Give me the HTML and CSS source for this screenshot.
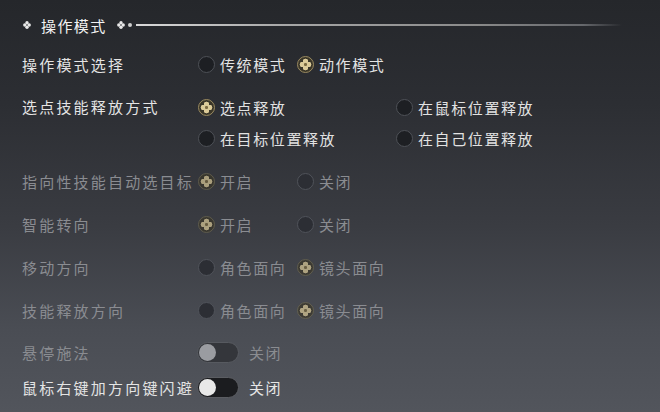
FILE: index.html
```html
<!DOCTYPE html>
<html lang="zh-CN">
<head>
  <meta charset="UTF-8">
  <title>操作模式</title>
  <link rel="stylesheet" href="styles.css">
</head>
<body>
  <div class="panel">
    <div class="title">
      <svg class="orn" width="8" height="8" viewBox="0 0 8 8"><circle cx="4" cy="1.8" r="1.7"/><circle cx="4" cy="6.2" r="1.7"/><circle cx="1.8" cy="4" r="1.7"/><circle cx="6.2" cy="4" r="1.7"/></svg>
      <span class="title-text">操作模式</span>
      <svg class="orn" width="8" height="8" viewBox="0 0 8 8"><circle cx="4" cy="1.8" r="1.7"/><circle cx="4" cy="6.2" r="1.7"/><circle cx="1.8" cy="4" r="1.7"/><circle cx="6.2" cy="4" r="1.7"/></svg>
      <span class="dot"></span>
      <span class="line"></span>
    </div>

    <div class="rows">
      <div class="row">
        <div class="label">操作模式选择</div>
        <div class="opts">
          <div class="opt"><span class="radio"></span>传统模式</div>
          <div class="opt"><span class="radio on"></span>动作模式</div>
        </div>
      </div>

      <div class="row multi">
        <div class="label">选点技能释放方式</div>
        <div class="opts wide">
          <div class="opt"><span class="radio on"></span>选点释放</div>
          <div class="opt"><span class="radio"></span>在鼠标位置释放</div>
          <div class="opt"><span class="radio"></span>在目标位置释放</div>
          <div class="opt"><span class="radio"></span>在自己位置释放</div>
        </div>
      </div>

      <div class="row off">
        <div class="label">指向性技能自动选目标</div>
        <div class="opts">
          <div class="opt"><span class="radio on"></span>开启</div>
          <div class="opt"><span class="radio"></span>关闭</div>
        </div>
      </div>

      <div class="row off">
        <div class="label">智能转向</div>
        <div class="opts">
          <div class="opt"><span class="radio on"></span>开启</div>
          <div class="opt"><span class="radio"></span>关闭</div>
        </div>
      </div>

      <div class="row off">
        <div class="label">移动方向</div>
        <div class="opts">
          <div class="opt"><span class="radio"></span>角色面向</div>
          <div class="opt"><span class="radio on"></span>镜头面向</div>
        </div>
      </div>

      <div class="row off">
        <div class="label">技能释放方向</div>
        <div class="opts">
          <div class="opt"><span class="radio"></span>角色面向</div>
          <div class="opt"><span class="radio on"></span>镜头面向</div>
        </div>
      </div>
    </div>

    <div class="toggles">
      <div class="row off">
        <div class="label">悬停施法</div>
        <div class="switch"><span class="knob"></span></div>
        <span class="state">关闭</span>
      </div>
      <div class="row">
        <div class="label">鼠标右键加方向键闪避</div>
        <div class="switch"><span class="knob"></span></div>
        <span class="state">关闭</span>
      </div>
    </div>
  </div>
</body>
</html>
```

FILE: styles.css
```css
html, body { margin: 0; height: 100%; }
body {
  font-family: "Noto Sans CJK SC", "Noto Sans", sans-serif;
  background: linear-gradient(180deg, #25272b 0%, #2c2e33 25%, #3a3c42 55%, #4a4d54 80%, #52555c 100%);
  color: #dedede;
  overflow: hidden;
}
.panel { padding: 0 0 0 22px; }

.title { display: flex; align-items: center; height: 50px; }
.title .orn { fill: #e8e8e8; }
.title .orn:first-child { margin-left: 1px; }
.title-text { font-size: 15px; color: #f2f2f2; letter-spacing: 1.4px; margin: 0 10px 0 10px; }
.dot { width: 4px; height: 4px; border-radius: 50%; background: #cfcfcf; margin: 0 4px 0 3px; }
.line {
  width: 486px; height: 2px;
  background: linear-gradient(90deg, #dadada 0%, #a8a8a8 30%, #8a8a8a 70%, #66686c 92%, rgba(90,92,96,0) 100%);
}

.rows { display: flex; flex-direction: column; gap: 15px; }
.row { display: flex; align-items: center; min-height: 28px; }
.label { width: 176px; font-size: 15px; letter-spacing: 2.2px; color: #e4e4e4; white-space: nowrap; }
.opts { display: grid; grid-template-columns: 99px 99px; row-gap: 3px; }
.opts.wide { grid-template-columns: 198px 198px; }
.multi { align-items: flex-start; }
.multi .label { line-height: 28px; }
.opt { display: flex; align-items: center; height: 28px; font-size: 15px; letter-spacing: 1.6px; color: #e2e2e2; }

.radio {
  width: 17px; height: 17px; box-sizing: border-box; border-radius: 50%;
  background: #1d1f23; border: 1.5px solid #4e5157; margin-right: 5px; flex: none;
}
.radio.on {
  border-color: #9a8a60;
  background:
    radial-gradient(circle at 50% 50%, #7a6a40 0 1.3px, transparent 1.7px),
    radial-gradient(circle at 50% 29%, #dccb98 0 2.5px, transparent 3px),
    radial-gradient(circle at 50% 71%, #dccb98 0 2.5px, transparent 3px),
    radial-gradient(circle at 29% 50%, #dccb98 0 2.5px, transparent 3px),
    radial-gradient(circle at 71% 50%, #dccb98 0 2.5px, transparent 3px),
    #3a3628;
}

.off .label, .off .opt, .off .state { color: #8a8c91; }
.off .radio:not(.on) { background: #2c2e34; border-color: #50535a; }
.off .radio.on { border-color: #6f6a52; opacity: 0.7; }

.toggles { display: flex; flex-direction: column; gap: 7px; margin-top: 14px; }
.switch {
  width: 42px; height: 21px; box-sizing: border-box; border-radius: 11px;
  background: #1b1c1f; border: 1.5px solid #5b5d62; display: flex; align-items: center; padding-left: 1px;
  margin-left: -1px;
}
.knob { width: 17px; height: 17px; border-radius: 50%; background: #e8e8e8; }
.off .switch { background: #34363b; border-color: #575a60; }
.off .knob { background: #9a9ca1; }
.state { font-size: 15px; letter-spacing: 1.6px; margin-left: 10px; color: #e6e6e6; }
```
